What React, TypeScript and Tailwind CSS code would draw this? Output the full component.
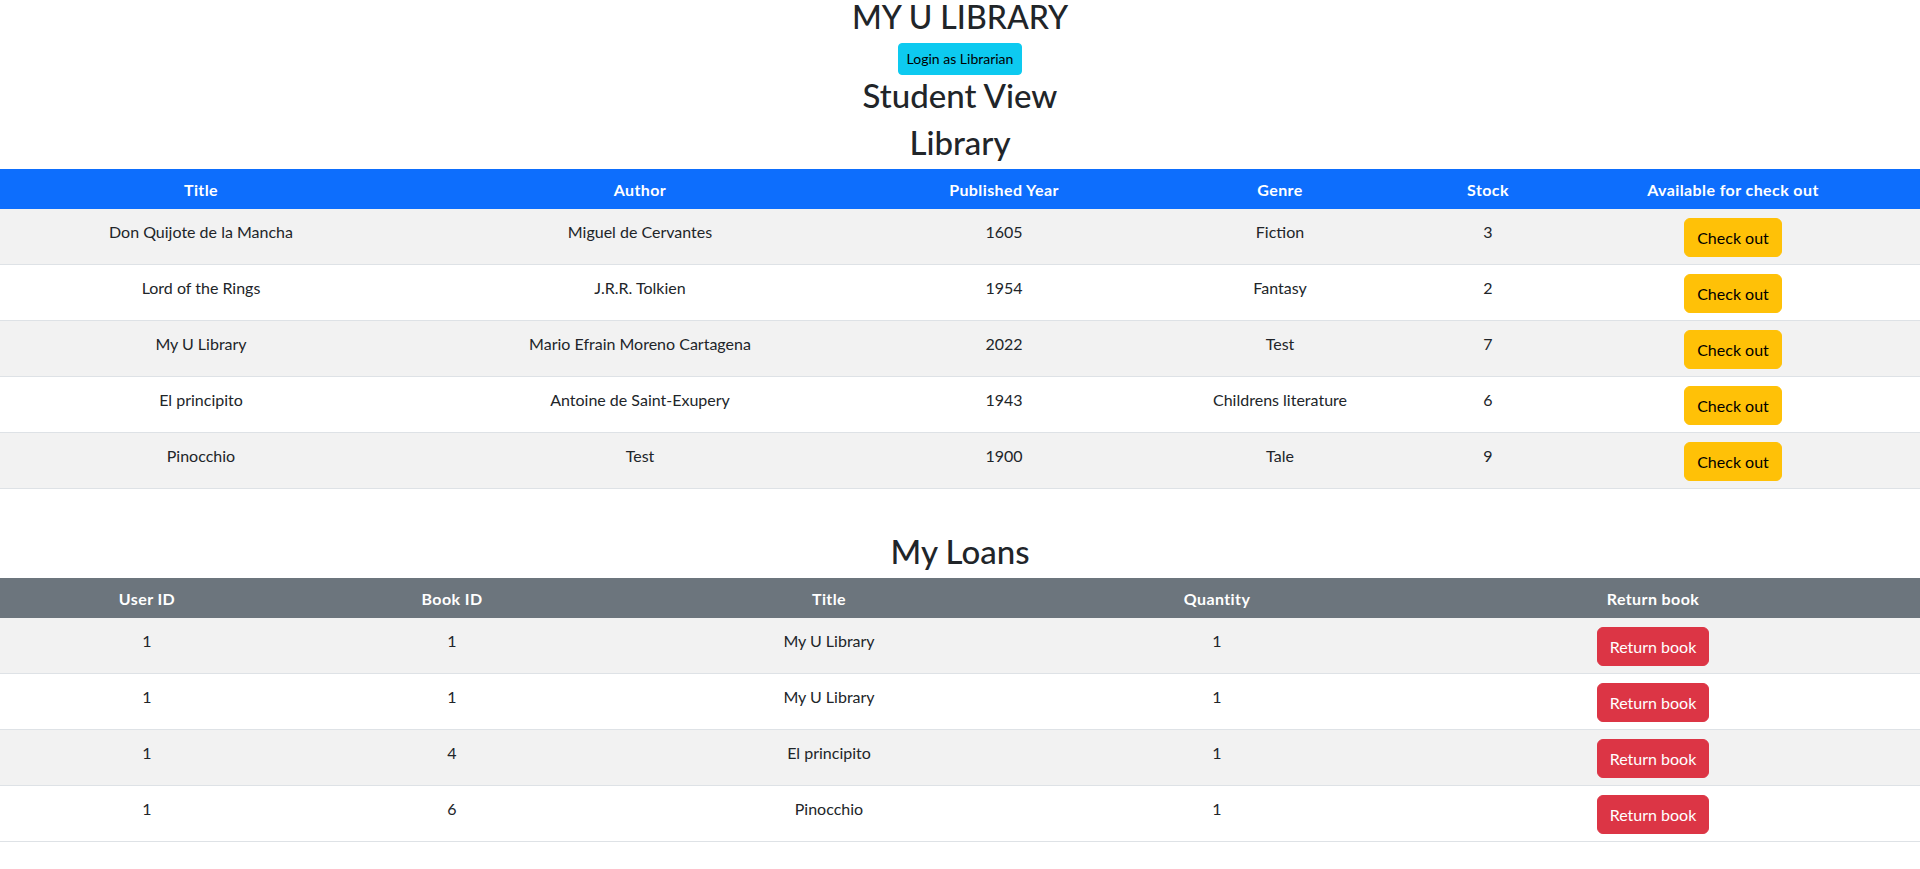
import React from "react";

type Book = {
    title: string;
    author: string;
    year: number;
    genre: string;
    stock: number;
};

type Loan = {
    userId: number;
    bookId: number;
    title: string;
    quantity: number;
};

const books: Book[] = [
    { title: "Don Quijote de la Mancha", author: "Miguel de Cervantes", year: 1605, genre: "Fiction", stock: 3 },
    { title: "Lord of the Rings", author: "J.R.R. Tolkien", year: 1954, genre: "Fantasy", stock: 2 },
    { title: "My U Library", author: "Mario Efrain Moreno Cartagena", year: 2022, genre: "Test", stock: 7 },
    { title: "El principito", author: "Antoine de Saint-Exupery", year: 1943, genre: "Childrens literature", stock: 6 },
    { title: "Pinocchio", author: "Test", year: 1900, genre: "Tale", stock: 9 },
];

const loans: Loan[] = [
    { userId: 1, bookId: 1, title: "My U Library", quantity: 1 },
    { userId: 1, bookId: 1, title: "My U Library", quantity: 1 },
    { userId: 1, bookId: 4, title: "El principito", quantity: 1 },
    { userId: 1, bookId: 6, title: "Pinocchio", quantity: 1 },
];

const thClass = "px-2 pt-[9px] pb-[7px] font-bold text-white leading-6 tracking-[0.4px]";
const tdClass = "px-2 pt-[11px] pb-2 align-top leading-6 border-b border-[#dee2e6]";
const btnCell = "px-2 pt-[9px] pb-[7px] align-top border-b border-[#dee2e6]";
const headingClass = "text-[33px] font-medium leading-[40px] mb-[7px]";

const App = () => {
    return (
        <div
            className="min-h-screen bg-white text-center text-[16px] text-[#212529]"
            style={{ fontFamily: '"Lato", "Liberation Sans", sans-serif' }}
        >
            <h2 className="text-[32px] font-medium leading-[34px] mb-[9px]">
                MY U LIBRARY
            </h2>
            <button className="rounded-[4px] bg-[#0dcaf0] px-2 py-1 text-[14px] leading-[22px] text-black border border-[#0dcaf0]">
                Login as Librarian
            </button>
            <h2 className={headingClass}>Student View</h2>
            <h2 className={headingClass}>Library</h2>

            {/* Books table */}
            <table className="w-full table-fixed border-collapse">
                <thead className="bg-[#0d6efd]">
                    <tr>
                        <th className={`${thClass} w-[402px]`}>Title</th>
                        <th className={`${thClass} w-[476px]`}>Author</th>
                        <th className={`${thClass} w-[252px]`}>Published Year</th>
                        <th className={`${thClass} w-[300px]`}>Genre</th>
                        <th className={`${thClass} w-[116px]`}>Stock</th>
                        <th className={thClass}>Available for check out</th>
                    </tr>
                </thead>
                <tbody>
                    {books.map((book, i) => (
                        <tr key={book.title} className={i % 2 === 0 ? "bg-[#f2f2f2]" : "bg-white"}>
                            <td className={tdClass}>{book.title}</td>
                            <td className={tdClass}>{book.author}</td>
                            <td className={tdClass}>{book.year}</td>
                            <td className={tdClass}>{book.genre}</td>
                            <td className={tdClass}>{book.stock}</td>
                            <td className={btnCell}>
                                <button className="rounded-[6px] bg-[#ffc107] px-3 py-[6px] leading-[25px] text-black border border-[#ffc107]">
                                    Check out
                                </button>
                            </td>
                        </tr>
                    ))}
                </tbody>
            </table>

            <h2 className={`${headingClass} mt-[42px]`}>My Loans</h2>

            {/* Loans table */}
            <table className="w-full table-fixed border-collapse">
                <thead className="bg-[#6c757d]">
                    <tr>
                        <th className={`${thClass} w-[294px]`}>User ID</th>
                        <th className={`${thClass} w-[316px]`}>Book ID</th>
                        <th className={`${thClass} w-[438px]`}>Title</th>
                        <th className={`${thClass} w-[338px]`}>Quantity</th>
                        <th className={thClass}>Return book</th>
                    </tr>
                </thead>
                <tbody>
                    {loans.map((loan, i) => (
                        <tr key={i} className={i % 2 === 0 ? "bg-[#f2f2f2]" : "bg-white"}>
                            <td className={tdClass}>{loan.userId}</td>
                            <td className={tdClass}>{loan.bookId}</td>
                            <td className={tdClass}>{loan.title}</td>
                            <td className={tdClass}>{loan.quantity}</td>
                            <td className={btnCell}>
                                <button className="rounded-[6px] bg-[#dc3545] px-3 py-[6px] leading-[25px] text-white border border-[#dc3545]">
                                    Return book
                                </button>
                            </td>
                        </tr>
                    ))}
                </tbody>
            </table>
        </div>
    );
};

export default App;
